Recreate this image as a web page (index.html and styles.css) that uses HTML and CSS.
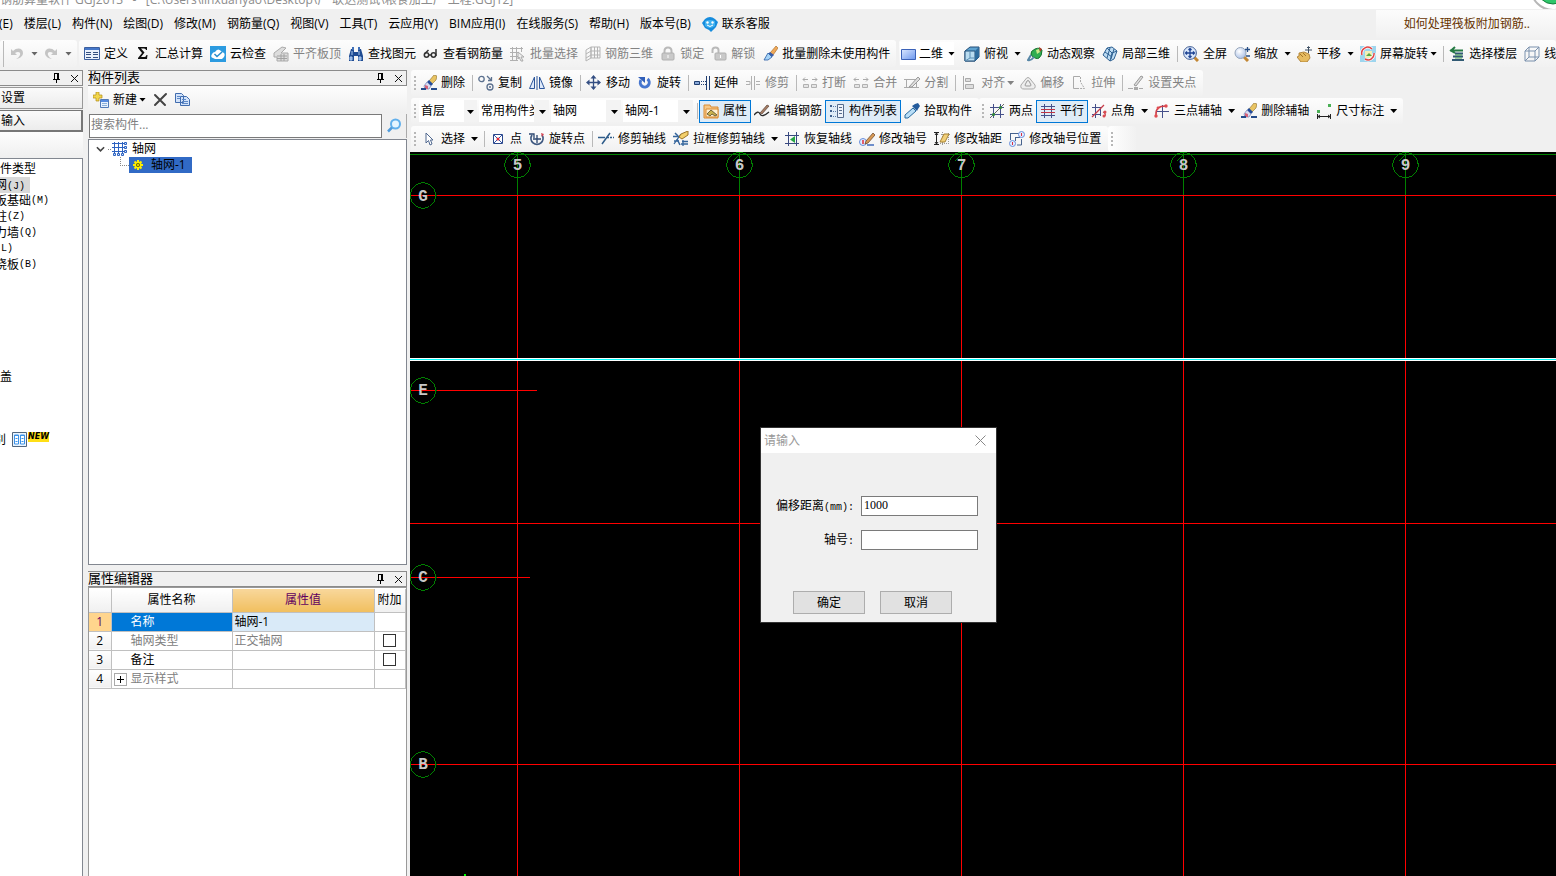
FILE: index.html
```html
<!DOCTYPE html>
<html lang="zh-CN">
<head>
<meta charset="utf-8">
<title>钢筋算量软件 GGJ2013</title>
<link rel="stylesheet" href="styles.css">
</head>
<body>
<svg class="defs" aria-hidden="true">
<defs>
<linearGradient id="blue" x1="0" y1="0" x2="1" y2="1"><stop offset="0" stop-color="#dbe8ff"/><stop offset="1" stop-color="#6b96ee"/></linearGradient>
<radialGradient id="glass" cx=".4" cy=".35" r=".7"><stop offset="0" stop-color="#fff"/><stop offset="1" stop-color="#a9bfe6"/></radialGradient>
<symbol id="undo" viewBox="0 0 16 16"><path d="M2 3v6h6L6 7c3-2 6-1 5 2-.5 1.500-2 3-4 4 4-.5 7-3 7-6 0-5-6-6-10-2z" fill="#c4c4c4"/></symbol>
<symbol id="redo" viewBox="0 0 16 16"><path d="M14 3v6H8l2-2C7 5 4 6 5 9c.5 1.500 2 3 4 4-4-.5-7-3-7-6 0-5 6-6 10-2z" fill="#c4c4c4"/></symbol>
<symbol id="define" viewBox="0 0 16 16"><path d="M.5 1.500h15v12H.5z" fill="#eaf1fc" stroke="#3c5f9e"/><path d="M1 2h14v2H1z" fill="#4577c9"/><path d="M2 6.500h5M2 8.500h5M2 11.500h5M9 6.500h5M9 8.500h5M9 11.500h5" stroke="#35507f"/></symbol>
<symbol id="sum" viewBox="0 0 16 16"><path d="M3 1h9v3h-1q0-1.500-2-1.500H6l3.500 4L6 11h3.500q1.500 0 2-2h1l-.5 4H3v-1l4-5-4-5z" fill="#111"/></symbol>
<symbol id="cloud" viewBox="0 0 16 16"><path d="M0 0h16v16H0z" fill="#2c9be0"/><path d="M3 12Q0 11 2 8 3 6 5 6q3-5 7 0 4 1 2 5l-2 2H5z" fill="#fff"/><path d="M4.500 8l2.500 2.500L12 6" fill="none" stroke="#2c8dcc" stroke-width="1.500"/></symbol>
<symbol id="level" viewBox="0 0 16 16"><path d="M1 7l8-6 4 1-5 5h7v8H4v-4H1z" fill="#ddd" stroke="#aaa"/><path d="M4 10h10M4 12.500h10M8 8v7M11 8v7" stroke="#a2a2a2"/></symbol>
<symbol id="find" viewBox="0 0 16 16"><path d="M3 3h3v3h4V3h3l2 7v5h-5v-5H6v5H1v-5z" fill="#1f4c93"/><path d="M4 1h2v3H4zM10 1h2v3h-2z" fill="#3f6fb8"/><path d="M2 11h2v3H2zM11 11h2v3h-2zM4 5v4M11 5v4" stroke="#a9c8ef" fill="#7da7df"/></symbol>
<symbol id="glasses" viewBox="0 0 16 16"><g fill="none" stroke="#333" stroke-width="1.500"><circle cx="3.500" cy="9" r="2.200"/><circle cx="10.500" cy="9" r="2.200"/><path d="M1.500 8l4-4M13 10V3M6 9h2"/></g></symbol>
<symbol id="batch" viewBox="0 0 16 16"><path d="M0 2.500h13M0 6.500h8M0 10.500h8M0 14.500h8M2.500 1v14M6.500 1v14M11.500 1v5" stroke="#b0b0b0"/><path d="M8 6l6 5h-3l2 4h-2l-2-4-1 2z" fill="#eee" stroke="#aaa"/></symbol>
<symbol id="rebar3d" viewBox="0 0 16 16"><path d="M1 4l5-3v11l-5 3zM6 1h9v11H6zM1 8l5-3h9M1 12l5-3h9M9.500 1v11M12.500 1v11" stroke="#b5b5b5" fill="none"/></symbol>
<symbol id="lock" viewBox="0 0 16 16"><path d="M4.500 8V5q0-3.500 3.500-3.500T11.500 5v3" fill="none" stroke="#b9b9b9" stroke-width="2"/><rect x="2" y="7" width="12" height="7" rx="1" fill="#c9c9c9" stroke="#b0b0b0"/><path d="M7.500 9h1v3h-1z" fill="#fff"/></symbol>
<symbol id="unlock" viewBox="0 0 16 16"><path d="M1.500 7V4q0-2.500 3-2.500t3 2.500v3" fill="none" stroke="#b9b9b9" stroke-width="2"/><rect x="4" y="7" width="11" height="7" rx="1" fill="#c9c9c9" stroke="#b0b0b0"/><path d="M9 9h1v3H9z" fill="#fff"/></symbol>
<symbol id="brush" viewBox="0 0 16 16"><path d="M13 0l3 1-1 4-4 4-3-3z" fill="#e9c463" stroke="#8c6d2c" stroke-width=".6"/><path d="M8 5l4 4-2 2-4-4z" fill="#234c9c"/><path d="M6 7l4 4-2 3H4l-1-3z" fill="#d8dcf2" stroke="#6c7bb0" stroke-width=".7"/><path d="M4 10l3 1v3H4z" fill="#d4637a"/><path d="M0 14h5M10 14h6" stroke="#244a8a" stroke-width="2"/></symbol>
<symbol id="clean" viewBox="0 0 16 16"><path d="M14 0l2 2-5 7-3-2z" fill="#efa95a" stroke="#a1641d" stroke-width=".6"/><path d="M8 6l4 3-2 2-4-3z" fill="#3b5da8"/><path d="M6 7l4 4-4 3H2z" fill="#a5d3f7" stroke="#265ca5" stroke-width=".8"/></symbol>
<symbol id="two" viewBox="0 0 16 16"><path d="M1.500 3.500h14v10h-14z" fill="url(#blue)" stroke="#3b62b8"/></symbol>
<symbol id="cube" viewBox="0 0 16 16"><path d="M1 5l5-4h9v10l-4 4H1z" fill="#5fa3d0" stroke="#234f78"/><path d="M1 5h10v10H1z" fill="#b9dcf0" stroke="#234f78"/><path d="M6 5v7l-5 3M6 12h5" stroke="#5a8fb5" fill="none"/><path d="M11 5l4-4v10l-4 4z" fill="#2e6c9d"/></symbol>
<symbol id="orbit" viewBox="0 0 16 16"><path d="M4 9Q3 5 8 3t7 1q0 6-3 8t-8-3z" fill="#2fae51" stroke="#17722f"/><path d="M9 4l3-1 1 3-3 2z" fill="#c9e88a"/><path d="M12 1l3 2-2 3z" fill="#b23a2b"/><path d="M4 9l-3 5q3 1 6-3" fill="none" stroke="#5786a6" stroke-width="2"/></symbol>
<symbol id="part3d" viewBox="0 0 16 16"><path d="M1 9l4-7 5-1 5 4-3 8-4 2z" fill="#bedcf3" stroke="#2c5f91"/><path d="M5 2l5 5 5-2M10 7l-2 8M3 6l7 5M8 2L5 12M12 3l-3 10" fill="none" stroke="#2c5f91"/></symbol>
<symbol id="full" viewBox="0 0 16 16"><path d="M11 11l4 4" stroke="#c28633" stroke-width="3"/><circle cx="7" cy="7" r="6.400" fill="#d9e7fb" stroke="#435f95"/><path d="M7 2.500v9M2.500 7h9M5.500 4L7 2.500 8.500 4M5.500 10L7 11.500 8.500 10M4 5.500L2.500 7 4 8.500M10 5.500L11.500 7 10 8.500" fill="none" stroke="#1f4494" stroke-width="1.300"/></symbol>
<symbol id="zoomi" viewBox="0 0 16 16"><path d="M10 11l4 4" stroke="#c28633" stroke-width="3"/><circle cx="6.500" cy="7" r="5.500" fill="url(#glass)" stroke="#95a5bb"/><path d="M11 3.500h5M13.500 1v5M12 10h4" stroke="#284f87" stroke-width="1.300"/></symbol>
<symbol id="pan" viewBox="0 0 16 16"><path d="M2 7l5-1 5 2 1 4-3 4H4l-4-5 2-1z" fill="#e6bb61" stroke="#a37427" stroke-width=".8"/><path d="M3 8l3 3M6 7l3 3" stroke="#a37427"/><path d="M8 4h7M11.500 1v6M10 2l1.500-1.500L13 2" fill="none" stroke="#3f5064"/></symbol>
<symbol id="screen" viewBox="0 0 16 16"><path d="M0 0h16v16H0z" fill="#9dd5ee"/><path d="M5 5h7v7H5z" fill="#f3efb5"/><path d="M6 10l3-3 3 3z" fill="#55a843"/><path d="M2 9a6 6 0 0 1 10-6M14 7a6 6 0 0 1-9 6" fill="none" stroke="#fff" stroke-width="3"/><path d="M2 9a6 6 0 0 1 10-6M14 7a6 6 0 0 1-9 6" fill="none" stroke="#e04646" stroke-width="1.500"/></symbol>
<symbol id="floors" viewBox="0 0 16 16"><path d="M1 4.500h13M6 1L2 4.500 6 7" stroke="#247a43" stroke-width="2" fill="none"/><path d="M6 7.500h8M4 10.500h10M3 14h12" stroke="#315a74" stroke-width="2"/><path d="M6 9h7M6 12h7" stroke="#48a553"/></symbol>
<symbol id="wire" viewBox="0 0 16 16"><path d="M1 5l4-4h10v10l-4 4H1zM1 5h10v10M11 5l4-4M5 1v10h10M5 11l-4 4" fill="none" stroke="#7b91ad"/></symbol>
<symbol id="copy2" viewBox="0 0 16 16"><g fill="none" stroke="#5c718f" stroke-width="1.300"><circle cx="3.500" cy="4" r="2.700"/><circle cx="12" cy="12" r="3"/><path d="M9 1l4 4M13.500 2v3.500H10"/></g><circle cx="12" cy="12" r="1" fill="#5c718f"/></symbol>
<symbol id="mirror" viewBox="0 0 16 16"><path d="M.5 13.500L5.500 2v11.500zM15.500 13.500L10.500 2v11.500z" fill="#dfeafb" stroke="#2c569b"/><path d="M8 1v14" stroke="#2c569b"/></symbol>
<symbol id="move" viewBox="0 0 16 16"><path d="M7.500 2v12M2 7.500h12" stroke="#344f83" stroke-width="1.300"/><path d="M7.500 0l3 3.500h-6zM7.500 15l3-3.500h-6zM0 7.500l3.500-3v6zM15 7.500l-3.500-3v6z" fill="#344f83"/></symbol>
<symbol id="rotate" viewBox="0 0 16 16"><path d="M10.500 4a4.500 4.500 0 1 1-6.500 1" fill="none" stroke="#4676cf" stroke-width="3"/><path d="M1 2h7v6z" fill="#315fb9"/></symbol>
<symbol id="extend" viewBox="0 0 16 16"><path d="M.5 6.500h5v3h-5zM12.500 1v14M15.500 1v14" fill="#88a8d8" stroke="#203e70"/><path d="M7 6.500h5M7 9.500h5" stroke="#203e70" stroke-dasharray="1 1"/></symbol>
<symbol id="trim" viewBox="0 0 16 16"><path d="M1 6.500h4v3H1M11 6.500h4M11 9.500h4M6.500 1v14M9.500 1v14" fill="none" stroke="#b0b0b0"/></symbol>
<symbol id="break" viewBox="0 0 16 16"><path d="M1.500 9.500h5v3h-5zM9.500 9.500h5v3h-5z" fill="#e5e5e5" stroke="#b0b0b0"/><path d="M1 4.500h5M3 2.500l-2 2 2 2M10 4.500h5M13 2.500l2 2-2 2" fill="none" stroke="#aaa"/></symbol>
<symbol id="split" viewBox="0 0 16 16"><path d="M0 4.500h12M0 12.500h15M2.500 5v8M12.500 3v10" fill="none" stroke="#aaa"/><path d="M5 12L14 2l2 2-8 8z" fill="#ddd" stroke="#999"/></symbol>
<symbol id="align" viewBox="0 0 16 16"><path d="M2.500 1v14M4.500 3.500h5v3h-5zM4.500 9.500h8v4h-8z" fill="#ddd" stroke="#aaa"/></symbol>
<symbol id="offset" viewBox="0 0 16 16"><path d="M5 5Q8 0 11 5l4 5q1 4-3 4H4q-4 0-3-4z" fill="#eee" stroke="#aaa"/><path d="M7 6q1-1 2 0l2 4q0 1-1 1H6q-1 0-1-1z" fill="none" stroke="#999"/></symbol>
<symbol id="stretch" viewBox="0 0 16 16"><path d="M9 1.500H2.500v12H8" fill="none" stroke="#aaa"/><path d="M9.500 2v5l4 6.500h-5" fill="none" stroke="#aaa" stroke-dasharray="2 1"/></symbol>
<symbol id="grippt" viewBox="0 0 16 16"><path d="M0 13.500h5M11 13.500h4" stroke="#aaa"/><path d="M6 10L13 1l2 1-7 9z" fill="#ddd" stroke="#999"/><path d="M6 12h4v3H6z" fill="#aaa"/></symbol>
<symbol id="prop" viewBox="0 0 16 16"><path d="M1 2h6l1 2h7v11H1z" fill="#f7c887" stroke="#d98b35"/><path d="M3 6h12v8H3z" fill="#fff0d0" stroke="#d98b35"/><path d="M4 11l4-4 6 5-2 1-3-2-2 2z" fill="#c9b04d" stroke="#42371b" stroke-width=".7"/></symbol>
<symbol id="editbar" viewBox="0 0 16 16"><path d="M0 12q4-5 6-1t9-2" fill="none" stroke="#2a2a2a" stroke-width="1.300"/><path d="M6 10l7-8 2 1-7 8z" fill="#a77d66" stroke="#4a3325" stroke-width=".6"/></symbol>
<symbol id="list" viewBox="0 0 16 16"><path d="M1 2h2v2H1zM1 7h2v2H1zM1 12h2v2H1z" fill="#3f608d"/><path d="M4 3.500h3M4 8.500h3M4 13.500h3" stroke="#577aa7" stroke-dasharray="1 1"/><path d="M8.500 1.500h6v13h-6z" fill="#eef4fb" stroke="#576c8c"/><path d="M10 4.500h3M10 7.500h3M10 10.500h3" stroke="#576c8c"/></symbol>
<symbol id="pick" viewBox="0 0 16 16"><path d="M9 5l3 3-8 7H1v-3z" fill="#b9def7" stroke="#296a9e"/><path d="M8 3l5 5 1-2 2-3-2-3-3 1z" fill="#245b9c"/></symbol>
<symbol id="axes" viewBox="0 0 16 16"><path d="M4.500 1v14M11.500 1v14M1 4.500h14M1 11.500h14" stroke="#45508a"/></symbol>
<symbol id="twopt" viewBox="0 0 16 16"><path d="M4.500 1v14M11.500 1v14M1 4.500h14M1 11.500h14" stroke="#45508a"/><path d="M1 15L15 1" stroke="#666"/><circle cx="4.500" cy="11.500" r="1.600" fill="#32883d"/><circle cx="11.500" cy="4.500" r="1.600" fill="#32883d"/></symbol>
<symbol id="parallel" viewBox="0 0 16 16"><path d="M4.500 1v14M11.500 1v14M1 3.500h14M1 12.500h14" stroke="#45508a"/><path d="M1 6.500h14M1 9.500h14" stroke="#bf3545"/></symbol>
<symbol id="ptangle" viewBox="0 0 16 16"><path d="M4.500 1v14M9.500 5v8M1 4.500h9M1 11.500h9" stroke="#45508a"/><path d="M1 14L13 2M12 9q3 1 2 4" stroke="#c83c48" fill="none" stroke-width="1.300"/><circle cx="14" cy="9" r="1.500" fill="#d94c52"/><circle cx="13" cy="13" r="1.500" fill="#d94c52"/></symbol>
<symbol id="three" viewBox="0 0 16 16"><path d="M8.500 2v13M3 8.500h12" stroke="#45508a"/><path d="M2 12Q1 3 12 3" fill="none" stroke="#cf3f49" stroke-width="1.500"/><g fill="#e04c51"><circle cx="2" cy="13" r="1.700"/><circle cx="4" cy="5" r="1.400"/><circle cx="12" cy="3" r="1.700"/></g></symbol>
<symbol id="dim" viewBox="0 0 16 16"><path d="M1 7h3v3H1zM12 1h3v3h-3z" fill="#4bb055"/><path d="M1.500 11v5M14.500 11v5M2 13.500h12M4 12l-2 1.500L4 15M12 12l2 1.500-2 1.500" fill="none" stroke="#222"/></symbol>
<symbol id="cursor" viewBox="0 0 16 16"><path d="M5 2v10l2.500-2.500L9 14l2-1-1.500-4H12z" fill="#fff" stroke="#50688f"/></symbol>
<symbol id="point" viewBox="0 0 16 16"><path d="M3.500 3.500h9v9h-9z" fill="#fff" stroke="#29478b"/><path d="M4 4l8 8M12 4l-8 8" stroke="#3655a4"/><circle cx="8" cy="8" r="1.500" fill="#e32638"/></symbol>
<symbol id="rotpt" viewBox="0 0 16 16"><path d="M3 4a6 6 0 1 0 10 0" fill="none" stroke="#3f5981" stroke-width="1.800"/><path d="M0 3h5v4M8 4v8M4 8h8" fill="none" stroke="#2c4770" stroke-width="1.300"/><path d="M12 2l3 1-2 3z" fill="#d24352"/></symbol>
<symbol id="trimaxis" viewBox="0 0 16 16"><path d="M0 6.500h7M4 13L12 2" stroke="#2e5c8a" stroke-width="1.500"/><path d="M9 6.500h7" stroke="#2e5c8a" stroke-width="1.500" stroke-dasharray="2 1"/></symbol>
<symbol id="boxtrim" viewBox="0 0 16 16"><path d="M0 5.500h6M1 13L8 3M1 10h5M8 13h7M10 9v6M9 10.500h6" stroke="#35659c" stroke-width="1.300"/><path d="M8 3l7-3v4L9 8 6 6z" fill="#f3d06c" stroke="#9d7529"/><path d="M2 2l3 3M4 8l3 6" stroke="#35659c" stroke-width="1.500"/></symbol>
<symbol id="restore" viewBox="0 0 16 16"><path d="M4.500 1v14M12.500 1v14M1 4.500h14M1 12.500h14" stroke="#394980"/><path d="M6 8.500L11 5v7z" fill="#27a545"/></symbol>
<symbol id="axisno" viewBox="0 0 16 16"><circle cx="4" cy="11" r="3.500" fill="#e3edff" stroke="#678ddb"/><path d="M4 9v4" stroke="#e12c3f" stroke-width="1.500"/><path d="M7 10l7-8 2 2-7 8-3 1z" fill="#d89a56" stroke="#633f23" stroke-width=".7"/><path d="M8 14h7" stroke="#6e8ecb" stroke-width="2"/></symbol>
<symbol id="axisgap" viewBox="0 0 16 16"><path d="M2.500 2v11M0 1.500h5M0 13.500h5M1 4l1.500-2L4 4M1 11l1.500 2L4 11" fill="none" stroke="#222"/><path d="M7 3.500h9M6 12.500h9M8.500 1v13M14.500 2v12" stroke="#999" stroke-dasharray="1 1"/><path d="M6 11L10 3h5l-4 8z" fill="#f1cf79" stroke="#a78233"/></symbol>
<symbol id="axispos" viewBox="0 0 16 16"><path d="M1 2.500h9M1.500 2v7M6 6.500h5M6.500 6v4M12.500 8v6H8" fill="none" stroke="#47638e"/><circle cx="12.500" cy="3.500" r="3" fill="#e3edff" stroke="#678ddb"/><circle cx="3.500" cy="12.500" r="3" fill="#e3edff" stroke="#678ddb"/><path d="M12.500 2v3M3.500 11v3" stroke="#d62d43"/></symbol>
<symbol id="service" viewBox="0 0 16 16"><path d="M3 3Q8-1 13 3l3 3-2 5-3 3-2 2-2-2-4-2-3-5z" fill="#168cdd"/><path d="M3 5q5-2 10 0v5q-5 4-10 0z" fill="#3fb0ee"/><circle cx="5.500" cy="6.500" r="1.200" fill="#fff"/><circle cx="10.500" cy="6.500" r="1.200" fill="#fff"/><path d="M5 9q3 3 6 0" fill="none" stroke="#fff"/></symbol>
<symbol id="new" viewBox="0 0 16 16"><path d="M3 0h3v3h3v3H6v3H3V6H0V3h3z" fill="#f1d64d" stroke="#b18e18" stroke-width=".7"/><path d="M7.500 7.500h8v8h-8z" fill="#e8f1fd" stroke="#527bb8"/><path d="M8 8h7v2H8z" fill="#568adf"/><path d="M9 11.500h5M9 13.500h5" stroke="#8aafd9"/></symbol>
<symbol id="del" viewBox="0 0 16 16"><path d="M3 3l10 10M14 2L3 13" stroke="#444" stroke-width="2" stroke-linecap="round"/></symbol>
<symbol id="copy" viewBox="0 0 16 16"><path d="M.5 1.500h6l2 2v7h-8zM5.500 4.500h6l3 3v6h-9z" fill="#d3e3fa" stroke="#416cae"/><path d="M2 4.500h3M2 6.500h3M7 7.500h4M7 9.500h6M7 11.500h6" stroke="#5d89c7"/></symbol>
<symbol id="search" viewBox="0 0 16 16"><circle cx="9.500" cy="6" r="4.500" fill="#e6f5ff" stroke="#62b0ec" stroke-width="2"/><path d="M6 9.500l-4 4" stroke="#4f9bdc" stroke-width="2.500"/></symbol>
<symbol id="pin" viewBox="0 0 9 10"><path d="M2 .5h5M2.500 0v6M5.500 0v6M6.500 0v6M1 6.500h7M4.500 6v4" stroke="#000" fill="none"/></symbol>
<symbol id="close" viewBox="0 0 9 9"><path d="M1 1l7 7M8 1l-7 7" stroke="#111" fill="none"/></symbol>
<symbol id="grid" viewBox="0 0 16 16"><path d="M2.500 1v13M6.500 1v13M10.500 1v13M0 2.500h14M0 6.500h14M0 10.500h14" stroke="#2d62c0"/><path d="M12.500 1.500h2v2h-2zM12.500 5.500h2v2h-2zM12.500 9.500h2v2h-2zM1.500 12.500h2v2h-2zM5.500 12.500h2v2h-2zM9.500 12.500h2v2h-2z" fill="#cfe0ff" stroke="#2d62c0"/></symbol>
<symbol id="gear" viewBox="0 0 12 12"><path d="M6 1v10M1 6h10M2.500 2.500l7 7M9.500 2.500l-7 7" stroke="#ffef00" stroke-width="2"/><circle cx="6" cy="6" r="3.500" fill="#ffef00"/><circle cx="6" cy="6" r="2" fill="#665f00"/><circle cx="6" cy="6" r="1" fill="#ffef00"/></symbol>
</defs>
</svg>

<header class="titlebar">
  <span>钢筋算量软件 GGJ2013 &nbsp; - &nbsp; [C:\Users\linxuanyao\Desktop\广 联达测试\粮食加工厂 工程.GGJ12]</span>
  <svg class="badge" viewBox="0 0 36 16"><circle cx="33" cy="-12" r="22" fill="#fff" stroke="#b7b7b7" stroke-width="2"/><circle cx="33" cy="-12" r="16" fill="#2fc66a" stroke="#16803d"/></svg>
</header>

<nav class="menubar">
  <button>(E)</button><button>楼层(L)</button><button>构件(N)</button><button>绘图(D)</button><button>修改(M)</button><button>钢筋量(Q)</button><button>视图(V)</button><button>工具(T)</button><button>云应用(Y)</button><button>BIM应用(I)</button><button>在线服务(S)</button><button>帮助(H)</button><button>版本号(B)</button><button class="service"><svg><use href="#service"/></svg>联系客服</button>
  <a class="tip" href="#help">如何处理筏板附加钢筋..</a>
</nav>

<div class="row main-row">
  <div class="band history"><i class="sep"></i>
    <button class="tool off" aria-label="撤销"><svg><use href="#undo"/></svg><i class="arrow"></i></button>
    <button class="tool off" aria-label="恢复"><svg><use href="#redo"/></svg><i class="arrow"></i></button>
  </div>
  <div class="band first">
    <button class="tool"><svg><use href="#define"/></svg>定义</button>
    <button class="tool"><svg><use href="#sum"/></svg>汇总计算</button>
    <button class="tool"><svg><use href="#cloud"/></svg>云检查</button>
    <button class="tool off"><svg><use href="#level"/></svg>平齐板顶</button>
    <button class="tool"><svg><use href="#find"/></svg>查找图元</button>
    <button class="tool"><svg><use href="#glasses"/></svg>查看钢筋量</button>
    <button class="tool off"><svg><use href="#batch"/></svg>批量选择</button>
    <button class="tool off"><svg><use href="#rebar3d"/></svg>钢筋三维</button>
    <button class="tool off"><svg><use href="#lock"/></svg>锁定</button>
    <button class="tool off"><svg><use href="#unlock"/></svg>解锁</button>
    <button class="tool"><svg><use href="#clean"/></svg>批量删除未使用构件</button>
  </div>
  <div class="band view">
    <button class="tool white"><svg><use href="#two"/></svg>二维<i class="arrow"></i></button>
    <button class="tool"><svg><use href="#cube"/></svg>俯视<i class="arrow"></i></button>
    <button class="tool"><svg><use href="#orbit"/></svg>动态观察</button>
    <button class="tool"><svg><use href="#part3d"/></svg>局部三维</button>
    <i class="sep"></i>
    <button class="tool"><svg><use href="#full"/></svg>全屏</button>
    <button class="tool"><svg><use href="#zoomi"/></svg>缩放<i class="arrow"></i></button>
    <button class="tool"><svg><use href="#pan"/></svg>平移<i class="arrow"></i></button>
    <button class="tool"><svg><use href="#screen"/></svg>屏幕旋转<i class="arrow tight"></i></button>
    <i class="sep"></i>
    <button class="tool"><svg><use href="#floors"/></svg>选择楼层</button>
    <button class="tool"><svg><use href="#wire"/></svg>线</button>
  </div>
</div>

<div class="work">
  <aside class="nav-pane">
    <div class="pane-head"><span></span><button aria-label="固定"><svg class="pin"><use href="#pin"/></svg></button><button aria-label="关闭"><svg class="x"><use href="#close"/></svg></button></div>
    <button class="tab">设置</button>
    <button class="tab down">输入</button>
    <div class="strip"></div>
    <ul class="types">
      <li class="root">件类型</li>
      <li><span class="on">网<span class="en">(J)</span></span></li>
      <li>板基础<span class="en">(M)</span></li>
      <li>柱<span class="en">(Z)</span></li>
      <li>力墙<span class="en">(Q)</span></li>
      <li><span class="en">(L)</span></li>
      <li>浇板<span class="en">(B)</span></li>
      <li class="root cover">盖</li>
      <li class="recog">别<svg class="cad" viewBox="0 0 15 15"><path d="M.5.500h14v14H.5z" fill="#eaf5ff" stroke="#52677f"/><path d="M2.500 3v9h4V3zM8.500 3v9h4V3z" fill="#fff" stroke="#3c93ea"/><path d="M2 3.500h5M8 3.500h5M3.500 6.500h2M3.500 9.500h2M9.500 6.500h2M9.500 9.500h2" stroke="#3c93ea"/></svg><b>NEW</b></li>
    </ul>
  </aside>

  <aside class="side">
    <section class="comp">
      <div class="pane-head"><span>构件列表</span><button aria-label="固定"><svg class="pin"><use href="#pin"/></svg></button><button aria-label="关闭"><svg class="x"><use href="#close"/></svg></button></div>
      <div class="comp-tools">
        <button class="tool"><svg><use href="#new"/></svg>新建<i class="arrow tight"></i></button>
        <button class="tool" aria-label="删除"><svg><use href="#del"/></svg></button>
        <button class="tool" aria-label="复制"><svg><use href="#copy"/></svg></button>
      </div>
      <form class="search"><input type="text" aria-label="搜索构件" placeholder="搜索构件..."><button type="button" aria-label="搜索"><svg><use href="#search"/></svg></button></form>
      <div class="tree">
        <div class="node"><svg class="chev" viewBox="0 0 10 6"><path d="M1 1l4 4 4-4" fill="none" stroke="#444" stroke-width="1.800"/></svg><i class="dots"></i><svg><use href="#grid"/></svg><span>轴网</span></div>
        <div class="node child"><i class="elbow"></i><span class="picked"><svg class="gear"><use href="#gear"/></svg>轴网-1</span></div>
      </div>
    </section>
    <section class="props">
      <div class="pane-head"><span>属性编辑器</span><button aria-label="固定"><svg class="pin"><use href="#pin"/></svg></button><button aria-label="关闭"><svg class="x"><use href="#close"/></svg></button></div>
      <div class="sheet">
        <table>
          <colgroup><col class="c1"><col class="c2"><col class="c3"><col class="c4"></colgroup>
          <tr><th></th><th>属性名称</th><th class="hot">属性值</th><th>附加</th></tr>
          <tr class="cur"><th>1</th><td class="name">名称</td><td class="val">轴网-1</td><td></td></tr>
          <tr class="dim"><th>2</th><td class="name">轴网类型</td><td>正交轴网</td><td class="chk"><input type="checkbox" aria-label="附加轴网类型"></td></tr>
          <tr><th>3</th><td class="name">备注</td><td></td><td class="chk"><input type="checkbox" aria-label="附加备注"></td></tr>
          <tr class="dim"><th>4</th><td class="name"><button class="plus" aria-label="展开"></button>显示样式</td><td></td><td></td></tr>
        </table>
      </div>
    </section>
  </aside>

  <main class="stage">
    <div class="row">
      <div class="band"><i class="grip"></i>
        <button class="tool"><svg><use href="#brush"/></svg>删除</button><i class="sep"></i>
        <button class="tool"><svg><use href="#copy2"/></svg>复制</button>
        <button class="tool"><svg><use href="#mirror"/></svg>镜像</button><i class="sep"></i>
        <button class="tool"><svg><use href="#move"/></svg>移动</button>
        <button class="tool"><svg><use href="#rotate"/></svg>旋转</button><i class="sep"></i>
        <button class="tool"><svg><use href="#extend"/></svg>延伸</button>
        <button class="tool off"><svg><use href="#trim"/></svg>修剪</button><i class="sep"></i>
        <button class="tool off"><svg><use href="#break"/></svg>打断</button>
        <button class="tool off"><svg><use href="#break"/></svg>合并</button>
        <button class="tool off"><svg><use href="#split"/></svg>分割</button><i class="sep"></i>
        <button class="tool off"><svg><use href="#align"/></svg>对齐<i class="arrow tight"></i></button>
        <button class="tool off"><svg><use href="#offset"/></svg>偏移</button>
        <button class="tool off"><svg><use href="#stretch"/></svg>拉伸</button><i class="sep"></i>
        <button class="tool off"><svg><use href="#grippt"/></svg>设置夹点</button>
      </div>
    </div>
    <div class="row">
      <div class="band"><i class="grip"></i>
        <div class="combos">
          <label class="combo narrow"><select aria-label="楼层"><option>首层</option></select></label>
          <label class="combo"><select aria-label="构件类别"><option>常用构件类型</option></select></label>
          <label class="combo"><select aria-label="构件类型"><option>轴网</option></select></label>
          <label class="combo"><select aria-label="构件"><option>轴网-1</option></select></label>
        </div>
        <i class="sep"></i>
        <button class="tool on"><svg><use href="#prop"/></svg>属性</button>
        <button class="tool"><svg><use href="#editbar"/></svg>编辑钢筋</button>
        <button class="tool on"><svg><use href="#list"/></svg>构件列表</button>
        <button class="tool"><svg><use href="#pick"/></svg>拾取构件</button>
      </div>
      <div class="band"><i class="grip"></i>
        <button class="tool"><svg><use href="#twopt"/></svg>两点</button>
        <button class="tool on"><svg><use href="#parallel"/></svg>平行</button>
        <button class="tool"><svg><use href="#ptangle"/></svg>点角<i class="arrow"></i></button>
        <button class="tool"><svg><use href="#three"/></svg>三点辅轴<i class="arrow"></i></button>
        <button class="tool"><svg><use href="#brush"/></svg>删除辅轴</button>
        <button class="tool"><svg><use href="#dim"/></svg>尺寸标注<i class="arrow"></i></button>
      </div>
    </div>
    <div class="row">
      <div class="band"><i class="grip"></i>
        <button class="tool"><svg><use href="#cursor"/></svg>选择<i class="arrow"></i></button><i class="sep"></i>
        <button class="tool"><svg><use href="#point"/></svg>点</button>
        <button class="tool"><svg><use href="#rotpt"/></svg>旋转点</button><i class="sep"></i>
        <button class="tool"><svg><use href="#trimaxis"/></svg>修剪轴线</button>
        <button class="tool"><svg><use href="#boxtrim"/></svg>拉框修剪轴线<i class="arrow"></i></button>
        <button class="tool"><svg><use href="#restore"/></svg>恢复轴线</button>
        <button class="tool"><svg><use href="#axisno"/></svg>修改轴号</button>
        <button class="tool"><svg><use href="#axisgap"/></svg>修改轴距</button>
        <button class="tool"><svg><use href="#axispos"/></svg>修改轴号位置</button>
      </div>
      <div class="band stub"><i class="grip"></i></div>
    </div>

    <div class="canvas">
      <svg class="drawing">
        <defs>
          <polygon id="bubble" points="0,-13 6.500,-11 11,-6.500 13,0 11,6.500 6.500,11 0,13 -6.500,11 -11,6.500 -13,0 -11,-6.500 -6.500,-11"/>
        </defs>
        <g class="red">
          <path d="M107.500 43v2000M329.500 43v2000M551.500 43v2000M773.500 43v2000M995.500 43v2000M0 238.500h127M0 425.500h120"/>
          <line x1="0" y1="43.500" x2="100%" y2="43.500"/>
          <line x1="0" y1="371.500" x2="100%" y2="371.500"/>
          <line x1="0" y1="612.500" x2="100%" y2="612.500"/>
        </g>
        <g class="green">
          <line x1="0" y1="2.500" x2="100%" y2="2.500"/>
          <path d="M107.500 0v43M329.500 0v43M551.500 0v43M773.500 0v43M995.500 0v43M101 9l6-6M323 9l6-6M545 9l6-6M767 9l6-6M989 9l6-6"/>
          <use href="#bubble" x="107.500" y="13"/><use href="#bubble" x="329.500" y="13"/><use href="#bubble" x="551.500" y="13"/><use href="#bubble" x="773.500" y="13"/><use href="#bubble" x="995.500" y="13"/>
          <use href="#bubble" x="13" y="43.500"/><use href="#bubble" x="13" y="238.500"/><use href="#bubble" x="13" y="425.500"/><use href="#bubble" x="13" y="612.500"/>
        </g>
        <rect x="0" y="206" width="100%" height="3" fill="#fff"/>
        <rect x="0" y="207" width="100%" height="1" fill="#0ff"/>
        <rect x="54" y="722" width="2" height="2" fill="#0f0"/>
        <g class="marks">
          <text x="107.500" y="18">5</text><text x="329.500" y="18">6</text><text x="551.500" y="18">7</text><text x="773.500" y="18">8</text><text x="995.500" y="18">9</text>
          <text x="13" y="49">G</text><text x="13" y="243">E</text><text x="13" y="430">C</text><text x="13" y="617">B</text>
        </g>
      </svg>
      <form class="dialog" role="dialog" aria-labelledby="dlg-title">
        <div class="dialog-head"><span id="dlg-title">请输入</span><button type="button" aria-label="关闭"><svg viewBox="0 0 11 11"><path d="M.5.500l10 10M10.500.500l-10 10" stroke="#888" fill="none"/></svg></button></div>
        <div class="fields">
          <label for="dist">偏移距离<span class="en">(mm):</span></label><input id="dist" type="text" value="1000">
          <label for="axis">轴号<span class="en">:</span></label><input id="axis" type="text">
        </div>
        <div class="actions"><button type="button">确定</button><button type="button">取消</button></div>
      </form>
    </div>
  </main>
</div>
</body>
</html>
```

FILE: styles.css
```css
* { box-sizing: border-box; }

html, body { height: 100%; }

body {
  margin: 0;
  display: flex;
  flex-direction: column;
  overflow: hidden;
  background: #f0f0f0;
  color: #000;
  font: 12px/16px "Open Sans", "Noto Sans CJK SC", sans-serif;
}

button, input, select {
  font: inherit;
  color: inherit;
  margin: 0;
  padding: 0;
  border: 0;
  border-radius: 0;
  background: none;
}

svg { display: block; flex: none; width: 16px; height: 16px; }
.defs { position: absolute; width: 0; height: 0; }
.en { font: 10px/16px "Liberation Mono", monospace; }

/* Title and menu */
.titlebar {
  position: relative;
  flex: none;
  display: flex;
  align-items: flex-end;
  height: 9px;
  overflow: hidden;
  background: #fff;
  color: #8c8c8c;
  white-space: nowrap;
}
.titlebar span { margin-bottom: 1px; }
.badge { position: absolute; right: 0; top: 0; width: 36px; height: 16px; }

.menubar {
  flex: none;
  display: flex;
  align-items: center;
  gap: 11px;
  height: 30px;
  margin: 0 0 1px -1px;
  white-space: nowrap;
}
.service { display: flex; align-items: center; gap: 4px; }
.tip {
  align-self: stretch;
  display: flex;
  align-items: center;
  margin: 1px 0 1px auto;
  padding: 0 26px 0 28px;
  background: linear-gradient(#fcfcfc, #f1f1f1);
  color: #663300;
  text-decoration: none;
}

/* Toolbars */
.row { flex: none; display: flex; height: 28px; white-space: nowrap; }
.band {
  display: flex;
  align-items: center;
  height: 26px;
  padding: 0 0 0 3px;
  border-radius: 3px;
  background: linear-gradient(#fdfdfd, #f1f1f1);
}
.main-row { height: 30px; gap: 2px; }
.main-row .band { height: 27px; }
.history { width: 77px; }
.first { padding-left: 5px; width: 817px; }
.view { flex: 1; min-width: 0; padding-left: 1px; margin-left: 1px; }
.history .tool { gap: 0; margin-right: 6px; }

.tool {
  display: flex;
  align-items: center;
  flex: none;
  gap: 4px;
  height: 23px;
  margin-right: 7px;
}
.off { color: #838383; }
.tool.on {
  margin: 0 3px 0 -4px;
  padding: 0 3px;
  border: 1px solid #0078d7;
  background: #dfecf7;
}
.white { gap: 3px; margin-right: 10px; background: #fff; }
.arrow {
  width: 7px;
  height: 4px;
  margin: 0 -1px 0 2px;
  background: currentColor;
  clip-path: polygon(0 0, 100% 0, 50% 100%);
}
.history .arrow { margin-left: 6px; background: #666; }
.arrow.tight { margin-left: -2px; }
.sep { flex: none; width: 1px; height: 16px; margin-right: 5px; background: #b9b9b9; }
.history .sep { height: 26px; }
.grip {
  flex: none;
  width: 2px;
  height: 15px;
  margin-right: 5px;
  background: repeating-linear-gradient(#b7b7b7 0 2px, transparent 2px 4px);
}
.stub { width: 28px; background: linear-gradient(90deg, #fff, #f1f1f1); }

.combos { display: flex; gap: 2px; margin: 0 4px 0 -2px; }
.combo {
  display: flex;
  position: relative;
  width: 70px;
  height: 22px;
  background: linear-gradient(90deg, #fff 0 55px, #f3f3f3 55px);
}
.combo.narrow { width: 58px; background: linear-gradient(90deg, #fff 0 45px, #f3f3f3 45px); }
.combo select { width: 100%; padding: 0 15px 0 2px; appearance: none; outline: 0; }
.combo::after {
  content: "";
  position: absolute;
  right: 3px;
  top: 10px;
  width: 7px;
  height: 4px;
  background: #000;
  clip-path: polygon(0 0, 100% 0, 50% 100%);
}

/* Workspace */
.work { flex: 1; display: flex; min-height: 0; }

.pane-head {
  flex: none;
  display: flex;
  align-items: center;
  gap: 9px;
  height: 16px;
  padding-right: 3px;
  border: 1px solid #8b8b8b;
  border-left: 0;
  font-size: 13px;
  line-height: 14px;
}
.pane-head span { flex: 1; padding-bottom: 3px; }
.pin { width: 9px; height: 10px; }
.x { width: 9px; height: 9px; }

.nav-pane { flex: none; display: flex; flex-direction: column; width: 83px; overflow: hidden; }
.tab {
  flex: none;
  height: 22px;
  margin-top: 1px;
  padding-left: 1px;
  border: solid #999;
  border-width: 1px 1px 1px 0;
  background: linear-gradient(#fafafa, #ececec);
  text-align: left;
}
.tab.down { border-width: 1px 2px 2px 0; border-color: #777; }
.strip { flex: none; height: 26px; background: linear-gradient(#fdfdfd, #efefef); }
.types {
  flex: 1;
  margin: 0;
  padding: 2px 0 0;
  border: solid #828790;
  border-width: 1px 1px 0 0;
  background: #fff;
  list-style: none;
  white-space: nowrap;
}
.types li { display: flex; height: 16px; margin-left: -5px; }
.types .on { background: #d9d9d9; padding-right: 5px; }
.types .root { margin-left: 0; }
.types .cover { margin-top: 96px; }
.types .recog { margin-top: 47px; gap: 6px; margin-left: -6px; }
.cad { width: 15px; height: 15px; }
.recog b {
  align-self: flex-start;
  margin-left: -5px;
  background: #ffdf16;
  font: italic bold 8px/10px "DejaVu Sans", sans-serif;
}

.side { flex: none; display: flex; flex-direction: column; gap: 6px; width: 319px; margin: 0 3px 0 5px; }
.comp { display: flex; flex-direction: column; flex: 495 0 0; min-height: 0; }
.comp-tools { flex: none; display: flex; align-items: center; height: 27px; padding: 0 0 0 5px; background: linear-gradient(#fdfdfd, #efefef); }
.search { flex: none; display: flex; height: 26px; padding: 1px 0 1px 1px; }
.search input { flex: 1; padding: 0 1px 2px; border: 1px solid #7a7a7a; background: #fff; outline: 0; }
.search input::placeholder { color: #808080; opacity: 1; }
.search button { display: grid; place-items: center; width: 25px; border-right: 1px solid #aaa; }
.tree { flex: 1; padding: 1px 0 0 7px; border: 1px solid #828790; background: #fff; }
.node { display: flex; align-items: center; height: 16px; }
.node span { margin-left: 4px; }
.chev { width: 9px; height: 6px; }
.dots { width: 3px; margin: 0 1px 0 3px; border-top: 1px dotted #888; }
.elbow { width: 9px; height: 9px; margin: 0 0 7px 24px; border: dotted #888; border-width: 0 0 1px 1px; }
.node .picked { display: flex; align-items: center; gap: 7px; height: 16px; margin-left: 0; padding: 0 6px 0 3px; background: #316ac5; }
.gear { width: 12px; height: 12px; }

.props { display: flex; flex-direction: column; flex: 305 0 0; min-height: 0; }
.sheet { flex: 1; padding: 1px 0 0; border: 1px solid #999; border-bottom: 0; background: #fff; }
table { width: 316px; border-collapse: collapse; table-layout: fixed; }
.c1 { width: 22px; }
.c2 { width: 121px; }
.c3 { width: 142px; }
.c4 { width: 31px; }
th, td { height: 19px; padding: 0 2px; border: 1px solid #c0c0c0; border-width: 0 1px 1px 0; text-align: left; line-height: 16px; white-space: nowrap; }
tr:first-child th { height: 23px; }
th { padding: 0; background: linear-gradient(#fff, #f0f0f0); font-weight: normal; text-align: center; }
tr .hot { background: linear-gradient(#f8d79b, #f1bf5f); color: #600060; }
.cur th { background: #ffd58d; color: #600060; }
.cur .name { background: #0078d7; color: #fff; }
.cur .val { background: #d9eaf8; }
.dim td { color: #808080; }
td.name { position: relative; padding-left: 19px; }
.chk input { display: block; width: 13px; height: 13px; margin: 0 auto; appearance: none; border: 1px solid #333; background: #fff; }
.plus {
  position: absolute;
  left: 2px;
  top: 3px;
  width: 13px;
  height: 13px;
  border: 1px solid #aaa;
  background: linear-gradient(#000, #000) center / 7px 1px no-repeat, linear-gradient(#000, #000) center / 1px 7px no-repeat;
}

/* Drawing area */
.stage { flex: 1; display: flex; flex-direction: column; min-width: 0; }
.stage .row { padding-left: 1px; }
.stage .row:nth-child(3) { height: 26px; }
.canvas { position: relative; flex: 1; min-height: 0; overflow: hidden; background: #000; }
.drawing { width: 100%; height: 100%; shape-rendering: crispEdges; }
.red { stroke: #f00; fill: none; }
.green { stroke: #008000; fill: none; }
.marks { fill: #c8c8c8; font: bold 16px "Liberation Mono", monospace; text-anchor: middle; }

.dialog {
  position: absolute;
  left: 351px;
  top: 276px;
  width: 235px;
  background: #f0f0f0;
  outline: 1px solid #333;
}
.dialog-head { display: flex; align-items: center; justify-content: space-between; height: 25px; padding: 0 10px 0 3px; background: #fff; color: #999; }
.dialog-head svg { width: 11px; height: 11px; }
.fields { display: grid; grid-template-columns: 1fr 117px; gap: 14px 7px; align-items: center; padding: 43px 18px 0 8px; }
.fields label { padding-top: 1px; text-align: right; }
.fields input { height: 20px; padding: 0 2px 2px; border: 1px solid #7a7a7a; background: #fff; font: 12px "Liberation Serif", serif; outline: 0; }
.actions { display: flex; justify-content: center; gap: 15px; padding: 41px 12px 8px 0; }
.actions button { width: 72px; height: 23px; border: 1px solid #adadad; background: #e1e1e1; }
```
